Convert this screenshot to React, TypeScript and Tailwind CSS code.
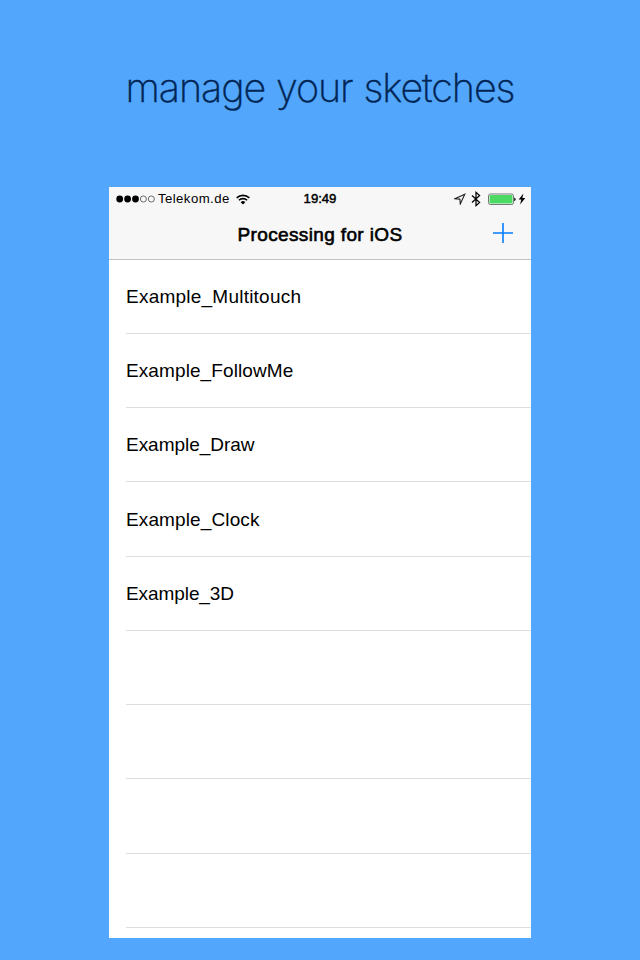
const rows: { name: string; style: string }[] = [
  { name: 'Example_Multitouch', style: 'h-[74px] tracking-[0.23px]' },
  { name: 'Example_FollowMe', style: 'h-[74px] tracking-[0.1px]' },
  { name: 'Example_Draw', style: 'h-[74px] tracking-[-0.03px]' },
  { name: 'Example_Clock', style: 'h-[75px] tracking-[0.12px]' },
  { name: 'Example_3D', style: 'h-[74px] tracking-[-0.08px]' },
  { name: '', style: 'h-[74px]' },
  { name: '', style: 'h-[74px]' },
  { name: '', style: 'h-[75px]' },
  { name: '', style: 'h-[74px]' },
];

function SignalDots() {
  return (
    <svg width="40" height="8" viewBox="0 0 40 8" className="shrink-0">
      {[0, 1, 2].map((i) => (
        <circle key={i} cx={3.7 + i * 7.9} cy="4" r="3.4" fill="#000" />
      ))}
      {[3, 4].map((i) => (
        <circle key={i} cx={3.7 + i * 7.9} cy="4" r="3.05" fill="none" stroke="#333" strokeWidth="0.7" />
      ))}
    </svg>
  );
}

function Wifi() {
  return (
    <svg width="14" height="11" viewBox="0 0 14 11" className="block shrink-0" fill="none" stroke="#000" strokeWidth="1.6">
      <path d="M0.7 3.9a9 9 0 0 1 12.6 0" />
      <path d="M2.9 6.3a5.8 5.8 0 0 1 8.2 0" />
      <path d="M7 10.5 4.7 8.2a3.2 3.2 0 0 1 4.6 0Z" fill="#000" stroke="none" />
    </svg>
  );
}

function StatusBar() {
  return (
    <div className="grid h-6 grid-cols-[1fr_auto_1fr] items-center text-[13.2px] leading-6">
      <div className="flex items-center pl-[7px]">
        <SignalDots />
        <span className="ml-[2px] w-[73px] whitespace-nowrap tracking-[0.42px]">Telekom.de</span>
        <span className="ml-[5px]"><Wifi /></span>
      </div>
      <span className="tracking-[-0.05px] [-webkit-text-stroke:0.45px_#000]">19:49</span>
      <div className="flex items-center justify-end pr-[5px]">
        <svg width="12" height="12" viewBox="0 0 12 12" fill="none" stroke="#222" strokeWidth="1.1" strokeLinejoin="miter">
          <path d="M10.8 1.2 1 5.7l4.9.4.4 4.9Z" />
        </svg>
        <svg width="10" height="16" viewBox="0 0 10 16" className="ml-[5px]" fill="none" stroke="#000" strokeWidth="1.25">
          <path d="M1 4.5 8.6 11.5 5 14.6V1.4L8.6 4.5 1 11.5" />
        </svg>
        <svg width="28" height="13" viewBox="0 0 28 13" className="ml-[7px]">
          <rect x="0.5" y="1" width="25" height="10.5" rx="1.8" fill="#fff" stroke="#777" />
          <rect x="1.5" y="2" width="23" height="8.5" rx="0.5" fill="#4cd964" />
          <path d="M26.2 4.4q1.4.6 1.4 1.9t-1.4 1.9Z" fill="#111" />
        </svg>
        <svg width="8" height="12" viewBox="0 0 8 12" className="ml-[2px]">
          <path d="M5.4.5.7 6.5h2.6L2.1 11.4 7.3 5.1H4.4Z" fill="#000" />
        </svg>
      </div>
    </div>
  );
}

export default function App() {
  return (
    <div className="flex h-[960px] w-[640px] flex-col items-center overflow-hidden bg-[#52a6fb] font-['Liberation_Sans',Arial,sans-serif] text-black">
      <h1 className="flex h-[187px] shrink-0 items-start justify-center whitespace-nowrap pt-[64px] font-['Inter','Liberation_Sans',sans-serif] text-[39.5px] font-extralight leading-[48px] tracking-[-1.1px] text-[#002554] [-webkit-text-stroke:0.4px_#002554] [word-spacing:1px]">
        manage your sketches
      </h1>
      <main className="flex h-[751px] w-[422px] flex-col overflow-hidden bg-white">
        <header className="h-[73px] shrink-0 border-b border-[#c4c4c4] bg-[#f7f7f7]">
          <StatusBar />
          <div className="grid h-[48px] grid-cols-[1fr_auto_1fr] items-center">
            <span />
            <h2 className="text-[19px] leading-[22px] tracking-[0.36px] [-webkit-text-stroke:0.6px_#000]">Processing for iOS</h2>
            <button aria-label="Add sketch" className="mr-[17px] mt-[-4px] justify-self-end">
              <svg width="22" height="22" viewBox="0 0 22 22" className="block" stroke="#087cff" strokeWidth="1.6">
                <path d="M11 1v20M1 11h20" />
              </svg>
            </button>
          </div>
        </header>
        <ul className="pl-[17px]">
          {rows.map((row, i) => (
            <li key={i} className={`flex items-center border-b border-[#dedede] pt-[2px] text-[19px] ${row.style}`}>
              {row.name}
            </li>
          ))}
        </ul>
      </main>
    </div>
  );
}
